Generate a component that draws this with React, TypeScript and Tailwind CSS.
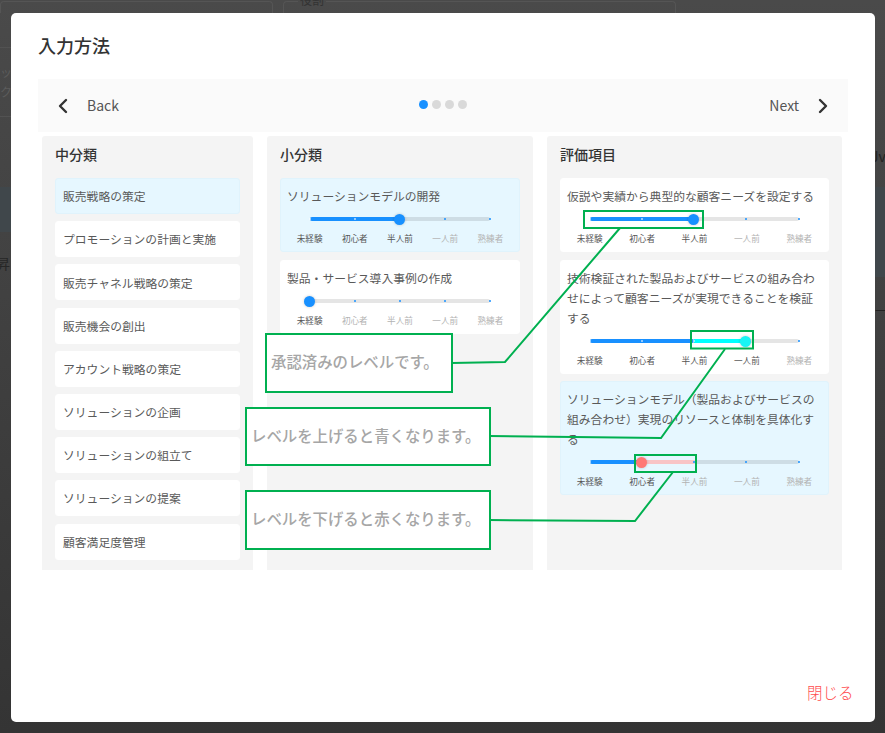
import { ChevronLeft, ChevronRight } from "lucide-react";

const levels = ["未経験", "初心者", "半人前", "一人前", "熟練者"];

const middle = [
  "販売戦略の策定",
  "プロモーションの計画と実施",
  "販売チャネル戦略の策定",
  "販売機会の創出",
  "アカウント戦略の策定",
  "ソリューションの企画",
  "ソリューションの組立て",
  "ソリューションの提案",
  "顧客満足度管理",
];

const small = [
  { title: "ソリューションモデルの開発", approved: 2, value: 2, active: true },
  { title: "製品・サービス導入事例の作成", approved: 0, value: 0, active: false },
];

const items = [
  { title: "仮説や実績から典型的な顧客ニーズを設定する", approved: 2, value: 2, active: false },
  {
    title: "技術検証された製品およびサービスの組み合わせによって顧客ニーズが実現できることを検証する",
    approved: 2,
    value: 3,
    active: false,
  },
  {
    title: "ソリューションモデル（製品およびサービスの組み合わせ）実現のリソースと体制を具体化する",
    approved: 2,
    value: 1,
    active: true,
  },
];

function LevelSlider({ approved, value, wide }: { approved: number; value: number; wide: boolean }) {
  const pct = (n: number) => `${n * 25}%`;
  const solid = Math.min(approved, value);
  const thumb = value > approved ? "bg-[#19f5f5]" : value < approved ? "bg-[#ff7875]" : "bg-[#1890ff]";

  return (
    <div className={wide ? "-mx-[3.5px]" : ""}>
      <div className={wide ? "mt-[11px] pr-[1px]" : "mt-[11px]"}>
        <div className={wide ? "relative mx-auto h-[4px] w-[209px] rounded-full bg-black/10" : "relative mx-auto h-[4px] w-[180px] rounded-full bg-black/10"}>
          <div className="absolute inset-y-0 left-0 rounded-full bg-[#1890ff]" style={{ width: pct(solid) }} />
          {value > approved && (
            <div
              className="absolute inset-y-0 bg-[#00ffff]"
              style={{ left: pct(approved), width: pct(value - approved) }}
            />
          )}
          {value < approved && (
            <div
              className="absolute inset-y-0 bg-[#f8c4c6]"
              style={{ left: pct(value), width: pct(approved - value) }}
            />
          )}
          {levels.map((level, i) => (
            <span
              key={level}
              className={`absolute top-[1px] -ml-[1px] h-[2px] w-[2px] rounded-full ${
                i <= value ? "bg-white/70" : "bg-[#1890ff]"
              }`}
              style={{ left: pct(i) }}
            />
          ))}
          <span
            className={`absolute -top-[3.5px] -ml-[6px] h-[11px] w-[11px] rounded-full shadow-[0_0_3px_rgba(0,0,0,0.2)] ${thumb}`}
            style={{ left: pct(value) }}
          />
        </div>
      </div>
      <div className="mt-[11px] grid grid-cols-5 text-center text-[8.6px] leading-[12px]">
        {levels.map((level, i) => (
          <span key={level} className={i <= value ? "text-[#555555]" : "text-[#b3b3b3]"}>
            {level}
          </span>
        ))}
      </div>
    </div>
  );
}

function SliderCard({
  title,
  approved,
  value,
  active,
  wide = false,
}: {
  title: string;
  approved: number;
  value: number;
  active: boolean;
  wide?: boolean;
}) {
  return (
    <div
      className={`rounded-[3px] border px-[6px] pt-[7px] pb-[7px] ${
        active ? "border-[#e0f3fc] bg-[#e6f7ff]" : "border-white bg-white"
      }`}
    >
      <p className="text-[11.8px] leading-[20px] text-[#595959]">{title}</p>
      <LevelSlider approved={approved} value={value} wide={wide} />
    </div>
  );
}

function Column({ title, width, children }: { title: string; width: string; children: React.ReactNode }) {
  return (
    <div className={`h-[434px] rounded-t-[3px] bg-[#f4f4f4] px-[13px] pt-[8px] ${width}`}>
      <h3 className="mb-[14px] text-[14px] leading-[20px] font-medium text-[#333333]">{title}</h3>
      {children}
    </div>
  );
}

export default function App() {
  return (
    <div className="relative flex h-[733px] w-[885px] flex-col overflow-hidden bg-linear-to-b from-[#4a4a4a] to-[#343434] font-['Noto_Sans_CJK_JP','Noto_Sans',sans-serif]">
      {/* page behind the dialog */}
      <div className="flex h-[13px] shrink-0 gap-[10px] overflow-hidden pt-[1px]">
        <div className="h-[20px] w-[273px] rounded-t-[4px] border-x border-t border-[#555555]" />
        <div className="h-[20px] w-[393px] rounded-t-[4px] border-x border-t border-[#555555]">
          <span className="-mt-[10px] ml-[14px] block w-fit bg-[#4a4a4a] px-[2px] text-[12px] leading-[16px] text-[#333333]">
            役割
          </span>
        </div>
      </div>

      <div className="flex h-[709px] shrink-0">
        <div className="w-[11px] shrink-0 overflow-hidden pt-[34px]">
          <div className="h-[70px] border-y border-[#525252] pt-[14px] text-[12px] leading-[20px] whitespace-nowrap text-[#5c5c5c]">
            ッ
            <br />
            ク
          </div>
          <div className="mt-[70px] h-[45px] bg-[#40474b]" />
          <div className="mt-[22px] -ml-[4px] text-[14px] leading-[18px] whitespace-nowrap text-[#262626]">昇</div>
        </div>

        {/* dialog */}
        <div className="flex h-[709px] w-[864px] shrink-0 flex-col rounded-[5px] bg-white">
          <h2 className="flex h-[66px] shrink-0 items-center px-[27px] pb-[2px] text-[18px] font-medium text-[#333333]">
            入力方法
          </h2>

          <div className="mx-[27px] w-[810px]">
            <div className="grid h-[53px] grid-cols-3 items-center bg-[#fafafa] px-[13px] text-[14px] text-[#555555]">
              <div className="flex items-center gap-[12px]">
                <ChevronLeft size={24} strokeWidth={2.4} className="text-[#333333]" />
                <span>Back</span>
              </div>
              <div className="mb-[2px] flex justify-center gap-[4px] pl-[1px]">
                <span className="h-[9px] w-[9px] rounded-full bg-[#1890ff]" />
                <span className="h-[9px] w-[9px] rounded-full bg-[#d9d9d9]" />
                <span className="h-[9px] w-[9px] rounded-full bg-[#d9d9d9]" />
                <span className="h-[9px] w-[9px] rounded-full bg-[#d9d9d9]" />
              </div>
              <div className="flex items-center justify-end gap-[12px]">
                <span>Next</span>
                <ChevronRight size={24} strokeWidth={2.4} className="text-[#333333]" />
              </div>
            </div>

            <div className="mt-[4px] flex gap-[14px] px-[4px]">
              <Column title="中分類" width="w-[211px]">
                <div className="flex flex-col gap-[7.2px]">
                  {middle.map((name, i) => (
                    <div
                      key={name}
                      className={`flex h-[36px] items-center rounded-[3px] border px-[7px] text-[11.8px] text-[#595959] ${
                        i === 0 ? "border-[#e0f3fc] bg-[#e6f7ff]" : "border-white bg-white"
                      }`}
                    >
                      {name}
                    </div>
                  ))}
                </div>
              </Column>

              <Column title="小分類" width="w-[266px]">
                <div className="flex flex-col gap-[8px]">
                  {small.map((card) => (
                    <SliderCard key={card.title} {...card} />
                  ))}
                </div>
              </Column>

              <Column title="評価項目" width="w-[295px]">
                <div className="flex flex-col">
                  <SliderCard {...items[0]} wide />
                  <div className="mt-[8px]">
                    <SliderCard {...items[1]} wide />
                  </div>
                  <div className="mt-[7px]">
                    <SliderCard {...items[2]} wide />
                  </div>
                </div>
              </Column>
            </div>
          </div>

          <div className="mt-auto flex justify-end pr-[21.5px] pb-[18px]">
            <button className="text-[15.5px] leading-[24px] font-light text-[#ff4d4f]">閉じる</button>
          </div>
        </div>

        <div className="w-[10px] shrink-0 overflow-hidden pt-[131px]">
          <div className="-ml-[4px] text-[14px] leading-[24px] whitespace-nowrap text-[#222222]">Jv</div>
          <div className="mt-[19px] h-[90px] bg-[#40474b]" />
          <div className="mt-[26px] text-[12px] leading-[16px] whitespace-nowrap text-[#222222]">一</div>
        </div>
      </div>

      {/* annotations drawn over the screenshot */}
      <svg className="pointer-events-none absolute inset-0" width="885" height="733" fill="none" stroke="#00b050" strokeWidth="2">
        <polyline points="452,363 505,362 620,228" />
        <polyline points="489,436 661,438 725,349" />
        <polyline points="489,520 635,521 673,472" />
        <rect x="584" y="211" width="119" height="17" />
        <rect x="691" y="331" width="62" height="17.5" />
        <rect x="635" y="455" width="61" height="17" />
      </svg>
      <div className="absolute top-[333px] left-[265px] flex h-[60px] w-[188px] items-center border-2 border-[#00b050] bg-white pb-[2px] pl-[4px] text-[15.4px] font-medium text-[#a6a6a6]">
        承認済みのレベルです。
      </div>
      <div className="absolute top-[407px] left-[245px] flex h-[59px] w-[246px] items-center border-2 border-[#00b050] bg-white pb-[2px] pl-[4px] text-[15.4px] font-medium text-[#a6a6a6]">
        レベルを上げると青くなります。
      </div>
      <div className="absolute top-[490px] left-[245px] flex h-[60px] w-[246px] items-center border-2 border-[#00b050] bg-white pb-[2px] pl-[4px] text-[15.4px] font-medium text-[#a6a6a6]">
        レベルを下げると赤くなります。
      </div>
    </div>
  );
}
